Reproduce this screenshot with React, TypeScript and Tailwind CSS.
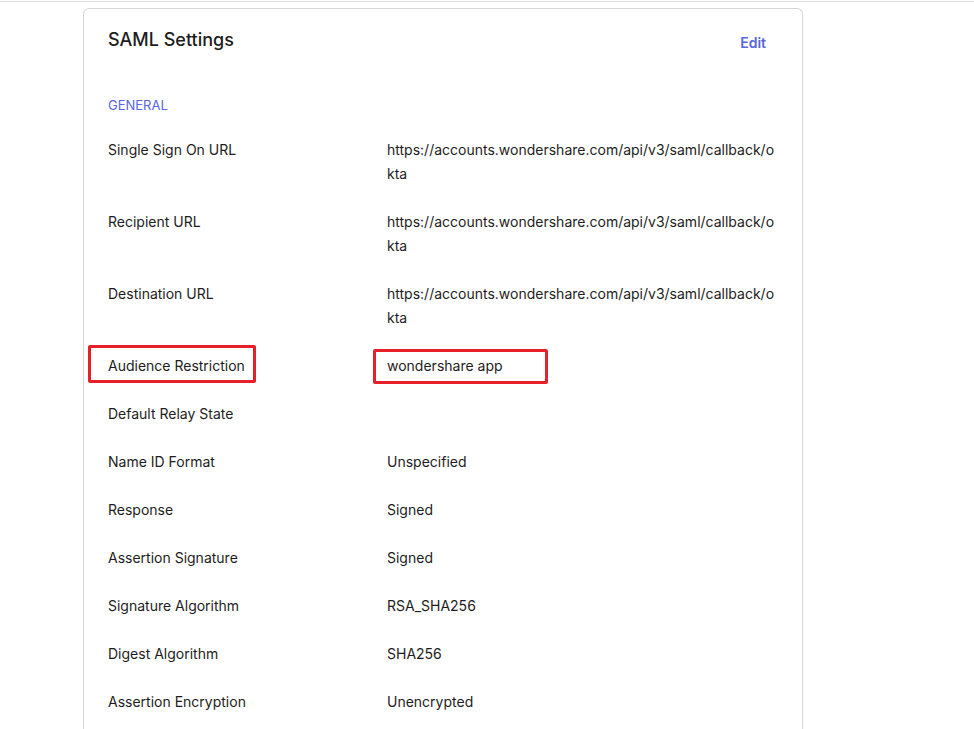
import React from "react";

const rows: { label: string; value: string; mark?: boolean }[] = [
  { label: "Single Sign On URL", value: "https://accounts.wondershare.com/api/v3/saml/callback/okta" },
  { label: "Recipient URL", value: "https://accounts.wondershare.com/api/v3/saml/callback/okta" },
  { label: "Destination URL", value: "https://accounts.wondershare.com/api/v3/saml/callback/okta" },
  { label: "Audience Restriction", value: "wondershare app", mark: true },
  { label: "Default Relay State", value: "" },
  { label: "Name ID Format", value: "Unspecified" },
  { label: "Response", value: "Signed" },
  { label: "Assertion Signature", value: "Signed" },
  { label: "Signature Algorithm", value: "RSA_SHA256" },
  { label: "Digest Algorithm", value: "SHA256" },
  { label: "Assertion Encryption", value: "Unencrypted" },
];

export default function App() {
  return (
    <div
      className="min-h-[729px] w-[974px] bg-white text-[#1d1d21]"
      style={{ fontFamily: "Inter, 'Noto Sans', sans-serif" }}
    >
      <div className="h-[2px] border-b border-[#dcdcdf]" />
      <div className="pl-[83px] pt-[6px]">
        <div className="w-[720px] rounded-t-[6px] border border-b-0 border-[#d7d7dc] px-[24px] pt-[17px] pb-10">
          <div className="flex items-start justify-between">
            <h2 className="text-[18px] leading-[28px] font-medium text-[#1d1d21]">SAML Settings</h2>
            <button className="mt-[7px] mr-[12px] text-[14px] leading-[20px] font-semibold text-[#5865e0]">
              Edit
            </button>
          </div>
          <div className="mt-[41px] text-[13px] leading-[20px] text-[#5a64e6]">GENERAL</div>
          <div className="mt-[23px] flex flex-col gap-6">
            {rows.map((r) => (
              <div key={r.label} className="flex text-[14px] leading-[24px]">
                <div className="relative w-[279px] shrink-0">
                  {r.mark && (
                    <div className="absolute left-[-20px] top-[-9px] h-[38px] w-[168px] rounded-[2px] border-[3px] border-[#e8202b]" />
                  )}
                  <span className="relative">{r.label}</span>
                </div>
                <div className="relative w-[391px] break-all">
                  {r.mark && (
                    <div className="absolute left-[-14px] top-[-5px] h-[35px] w-[175px] rounded-[2px] border-[3px] border-[#e8202b]" />
                  )}
                  <span className="relative">{r.value}</span>
                </div>
              </div>
            ))}
          </div>
        </div>
      </div>
    </div>
  );
}
